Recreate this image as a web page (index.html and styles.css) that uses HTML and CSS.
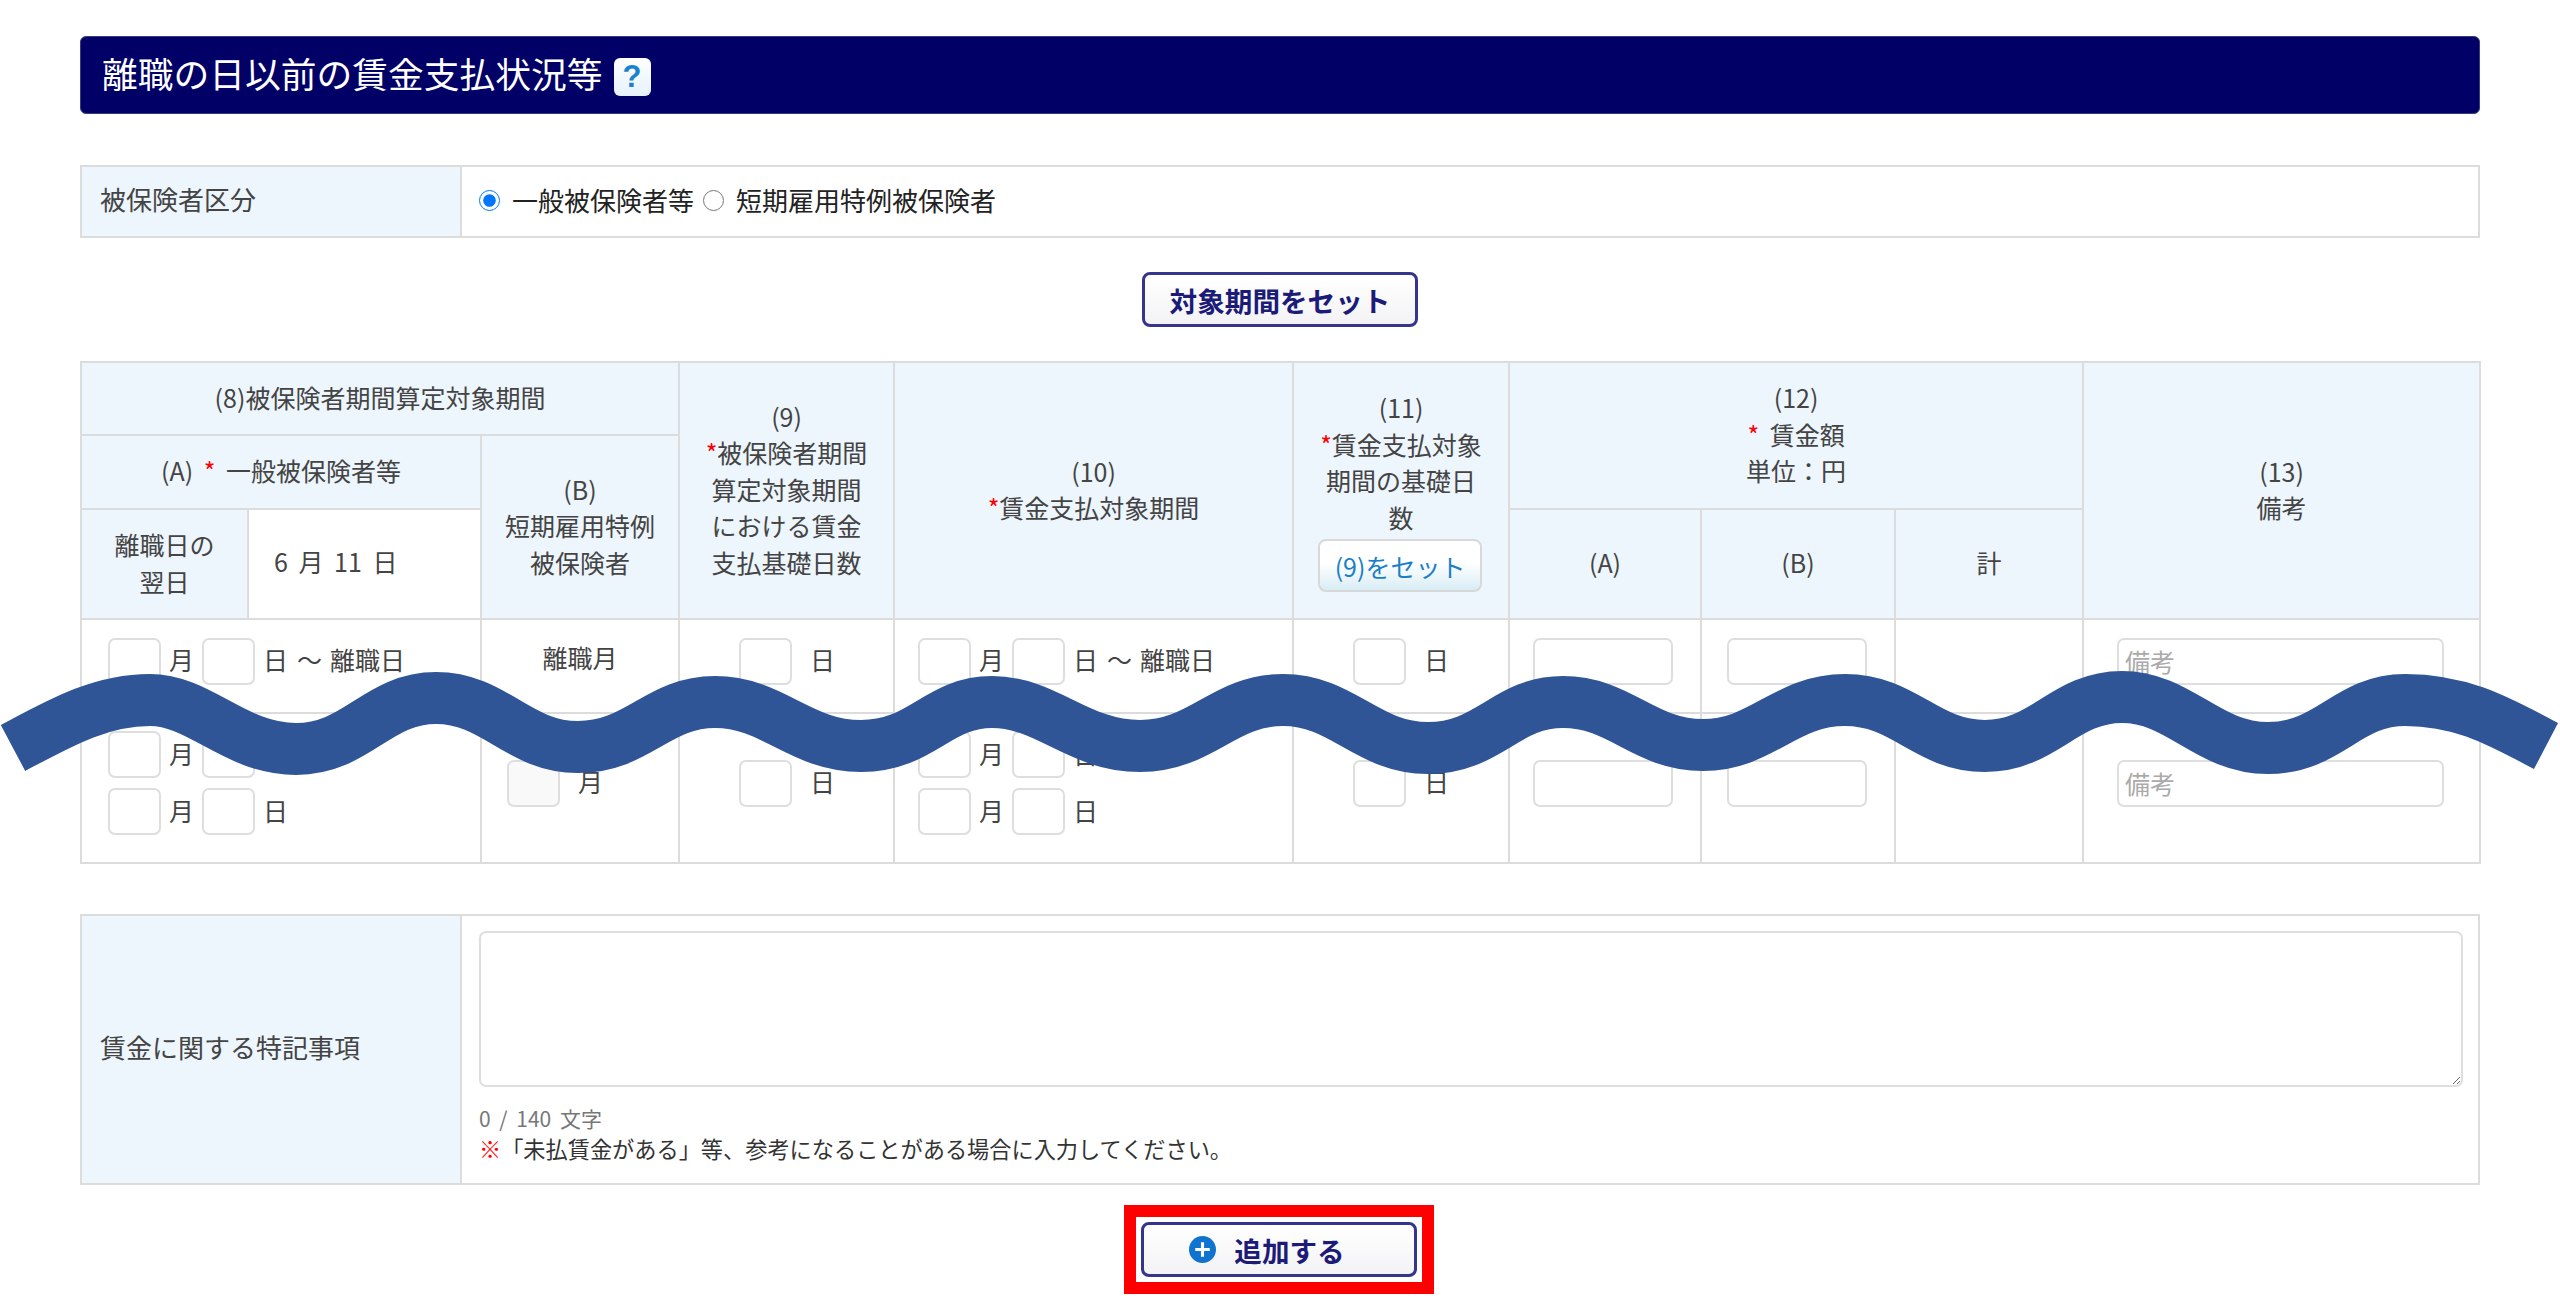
FILE: index.html
```html
<!DOCTYPE html>
<html lang="ja">
<head>
    <meta charset="utf-8">
    <title>離職の日以前の賃金支払状況等</title>
    <link rel="stylesheet" href="styles.css">
</head>
<body>
    <div class="page">
        <h2 class="section-title">離職の日以前の賃金支払状況等 <span class="help-icon">?</span></h2>

        <table class="form-table type-table">
            <tr>
                <th>被保険者区分</th>
                <td>
                    <div class="radio-group">
                        <input type="radio" id="typeGeneral" name="insuredType" checked>
                        <label for="typeGeneral">一般被保険者等</label>
                        <input type="radio" id="typeShort" name="insuredType">
                        <label for="typeShort">短期雇用特例被保険者</label>
                    </div>
                </td>
            </tr>
        </table>

        <div class="button-row period-row">
            <button type="button" class="main-button">対象期間をセット</button>
        </div>

        <table class="wage-table">
            <colgroup>
                <col class="col-a1"><col class="col-a2"><col class="col-b"><col class="col-9"><col class="col-10">
                <col class="col-11"><col class="col-12a"><col class="col-12b"><col class="col-total"><col class="col-13">
            </colgroup>
            <thead>
                <tr class="head-1">
                    <th colspan="3">(8)被保険者期間算定対象期間</th>
                    <th rowspan="3">(9)<br><span class="req">*</span>被保険者期間<br>算定対象期間<br>における賃金<br>支払基礎日数</th>
                    <th rowspan="3">(10)<br><span class="req">*</span>賃金支払対象期間</th>
                    <th rowspan="3" class="set-cell">
                        (11)<br><span class="req">*</span>賃金支払対象<br>期間の基礎日<br>数
                        <button type="button" class="sub-button">(9)をセット</button>
                    </th>
                    <th colspan="3" rowspan="2">(12)<br><span class="req">*</span> 賃金額<br>単位：円</th>
                    <th rowspan="3">(13)<br>備考</th>
                </tr>
                <tr class="head-2">
                    <th colspan="2">(A) <span class="req">*</span> 一般被保険者等</th>
                    <th rowspan="2">(B)<br>短期雇用特例<br>被保険者</th>
                </tr>
                <tr class="head-3">
                    <th>離職日の<br>翌日</th>
                    <td class="leave-date">6 月 11 日</td>
                    <th>(A)</th>
                    <th>(B)</th>
                    <th>計</th>
                </tr>
            </thead>
            <tbody>
                <tr class="body-1">
                    <td colspan="2" class="date-cell">
                        <div class="date-row">
                            <input type="text" class="num-input"><span>月</span>
                            <input type="text" class="num-input"><span>日<span class="tilde">～</span>離職日</span>
                        </div>
                    </td>
                    <td class="center-text"><div class="month-label">離職月</div></td>
                    <td class="days-cell"><div class="days-row"><input type="text" class="num-input"><span>日</span></div></td>
                    <td class="date-cell pay">
                        <div class="date-row">
                            <input type="text" class="num-input"><span>月</span>
                            <input type="text" class="num-input"><span>日<span class="tilde">～</span>離職日</span>
                        </div>
                    </td>
                    <td class="days-cell"><div class="days-row"><input type="text" class="num-input"><span>日</span></div></td>
                    <td class="amount-cell"><input type="text" class="amount-input"></td>
                    <td class="amount-cell second"><input type="text" class="amount-input"></td>
                    <td></td>
                    <td class="note-cell"><input type="text" class="note-input" placeholder="備考"></td>
                </tr>
                <tr class="body-2">
                    <td colspan="2" class="date-cell">
                        <div class="date-row">
                            <input type="text" class="num-input"><span>月</span>
                            <input type="text" class="num-input"><span>日</span>
                        </div>
                        <div class="date-row">
                            <input type="text" class="num-input"><span>月</span>
                            <input type="text" class="num-input"><span>日</span>
                        </div>
                    </td>
                    <td class="month-cell"><div class="days-row"><input type="text" class="num-input disabled-input"><span>月</span></div></td>
                    <td class="days-cell"><div class="days-row"><input type="text" class="num-input"><span>日</span></div></td>
                    <td class="date-cell pay">
                        <div class="date-row">
                            <input type="text" class="num-input"><span>月</span>
                            <input type="text" class="num-input"><span>日</span>
                        </div>
                        <div class="date-row">
                            <input type="text" class="num-input"><span>月</span>
                            <input type="text" class="num-input"><span>日</span>
                        </div>
                    </td>
                    <td class="days-cell"><div class="days-row"><input type="text" class="num-input"><span>日</span></div></td>
                    <td class="amount-cell"><input type="text" class="amount-input"></td>
                    <td class="amount-cell second"><input type="text" class="amount-input"></td>
                    <td></td>
                    <td class="note-cell"><input type="text" class="note-input" placeholder="備考"></td>
                </tr>
            </tbody>
        </table>

        <table class="form-table remark-table">
            <tr>
                <th>賃金に関する特記事項</th>
                <td>
                    <textarea class="remark-input"></textarea>
                    <div class="char-count">0 / 140 文字</div>
                    <div class="remark-note"><span class="note-mark">※</span>「未払賃金がある」等、参考になることがある場合に入力してください。</div>
                </td>
            </tr>
        </table>

        <div class="button-row">
            <div class="highlight-box">
                <button type="button" class="main-button add-button">
                    <svg class="plus-icon" viewBox="0 0 26 26" width="27" height="27">
                        <circle cx="13" cy="13" r="13" fill="#0f74cf"/>
                        <path d="M13 6v14M6 13h14" stroke="#fff" stroke-width="3"/>
                    </svg>
                    追加する
                </button>
            </div>
        </div>
    </div>

    <!-- page break mark drawn over the table -->
    <svg class="wave" viewBox="0 0 2560 1309" width="2560" height="1309">
        <path d="M13 748 C60 723 100 700 150 700 S235 749 296 749 S377 698 436 698 S518 747 578 747 S657 702 715 702 S800 746 861 746 S937 702 992 702 S1078 746 1140 746 S1223 700 1283 700 S1367 748 1428 748 S1506 702 1563 702 S1644 745 1703 745 S1785 700 1845 700 S1926 746 1985 746 S2064 697 2122 697 S2207 748 2268 748 S2347 700 2405 700 S2500 722 2546 746" fill="none" stroke="#2f5597" stroke-width="52"/>
    </svg>
</body>
</html>
```

FILE: styles.css
```css
* {
    box-sizing: border-box;
}
html, body {
    margin: 0;
    background-color: white;
}
body {
    position: relative;
    font-family: "Noto Sans CJK JP", "Noto Sans", sans-serif;
    font-size: 25px;
    line-height: 36.5px;
    color: #444;
}
.page {
    width: 2560px;
    padding: 36px 80px 15px;
}
.section-title {
    display: flex;
    align-items: center;
    gap: 11px;
    height: 78px;
    margin: 0 0 51px;
    padding: 0 21px 5px;
    background-color: #000066;
    border: 1px solid #3a3a80;
    border-radius: 6px;
    color: white;
    font-size: 35.75px;
    font-weight: normal;
    line-height: 1;
}
.help-icon {
    width: 37px;
    height: 38px;
    margin-top: 9px;
    background: linear-gradient(#ffffff, #e6f2fb);
    border-radius: 6px;
    color: #1a82d0;
    font-family: "Liberation Sans", sans-serif;
    font-size: 31px;
    font-weight: bold;
    line-height: 38px;
    text-align: center;
}
table {
    width: 100%;
    border-collapse: collapse;
    table-layout: fixed;
}
th, td {
    border: 2px solid #dcdcdc;
    padding: 0;
}
th {
    background-color: #edf5fd;
    font-weight: normal;
}
.form-table th {
    width: 380px;
    padding: 0 0 4px 18px;
    font-size: 26px;
    text-align: left;
}
.type-table tr {
    height: 71px;
}
.type-table td {
    padding-left: 17px;
}
.radio-group {
    display: flex;
    align-items: center;
    margin-bottom: 3px;
    color: #222;
    font-size: 26px;
}
.radio-group input {
    width: 21px;
    height: 21px;
    margin: 0 12px 0 0;
    accent-color: #0075ff;
}
.radio-group label {
    margin-right: 9px;
}
.button-row {
    display: flex;
    justify-content: center;
}
.period-row {
    margin: 34px 0;
}
.main-button {
    display: flex;
    align-items: center;
    justify-content: center;
    width: 276px;
    height: 55px;
    padding: 0;
    background: linear-gradient(#ffffff, #f3f3f5);
    border: 3px solid #35358c;
    border-radius: 8px;
    color: #1c1c78;
    font-family: inherit;
    font-size: 27.6px;
    font-weight: bold;
    cursor: pointer;
}

.col-a1 { width: 167px; }
.col-a2 { width: 233px; }
.col-b { width: 198px; }
.col-9 { width: 215px; }
.col-10 { width: 399px; }
.col-11 { width: 216px; }
.col-12a { width: 192px; }
.col-12b { width: 194px; }
.col-total { width: 188px; }
.col-13 { width: 397px; }

.head-1 { height: 73px; }
.head-2 { height: 74px; }
.head-3 { height: 110px; }
.body-1 { height: 94px; }
.body-2 { height: 150px; }

.wage-table {
    width: 2399px;
    margin-bottom: 50px;
}
.wage-table th {
    padding-bottom: 3px;
    text-align: center;
    word-spacing: 5px;
}
.wage-table .set-cell {
    padding-bottom: 0;
}
.req {
    color: #f00;
}
.sub-button {
    display: block;
    width: 164px;
    height: 53px;
    margin: 4px 0 0 24px;
    padding: 0;
    background: linear-gradient(#ffffff 45%, #d8edf5);
    border: 2px solid #d8d8d8;
    border-radius: 8px;
    color: #1a7fc8;
    font-family: inherit;
    font-size: 25px;
    cursor: pointer;
}
.leave-date {
    padding: 0 0 6px 25px;
    word-spacing: 5px;
}
input[type="text"] {
    height: 47px;
    background-color: white;
    border: 2px solid #dedede;
    border-radius: 7px;
    font-family: inherit;
    font-size: 25px;
    padding: 0 6px;
}
input::placeholder {
    color: #aaa;
}
.num-input {
    flex: none;
    width: 53px;
}
input.disabled-input {
    background-color: #f9f9f9;
}
.date-cell {
    padding-left: 26px;
}
.date-cell.pay {
    padding-left: 23px;
}
.date-row {
    display: flex;
    align-items: center;
    gap: 8px;
    margin-bottom: 10px;
}
.date-row span, .days-row span {
    padding-bottom: 3px;
}
.date-row span span {
    padding-bottom: 0;
}
.tilde {
    margin: 0 8px 0 9px;
}
.center-text {
    text-align: center;
}
.month-label {
    margin-bottom: 18px;
}
.days-cell {
    padding-left: 59px;
}
.month-cell {
    padding-left: 25px;
}
.days-row {
    display: flex;
    align-items: center;
    gap: 18px;
    margin-bottom: 10px;
}
.amount-cell {
    padding-left: 23px;
}
.amount-cell.second {
    padding-left: 25px;
}
.amount-input {
    display: block;
    width: 140px;
    margin-bottom: 10px;
}
.note-cell {
    padding-left: 33px;
}
.note-input {
    display: block;
    width: 327px;
    margin-bottom: 10px;
}

.remark-table tr {
    height: 269px;
}
.remark-table td {
    padding: 15px 15px 0 17px;
    vertical-align: top;
}
.remark-input {
    display: block;
    width: 100%;
    height: 156px;
    background-color: white;
    border: 2px solid #dedede;
    border-radius: 7px;
}
.char-count {
    margin-top: 16px;
    color: #777;
    font-size: 21px;
    line-height: 30px;
    word-spacing: 4px;
}
.remark-note {
    color: #333;
    font-size: 22.2px;
    line-height: 30px;
}
.note-mark {
    color: #f00;
    font-weight: bold;
}
.highlight-box {
    margin: 20px 2px 0 0;
    padding: 5px;
    border: 12px solid #f00;
}
.add-button {
    gap: 18px;
    padding-right: 24px;
}
.plus-icon {
    flex: none;
}
.wave {
    position: absolute;
    top: 0;
    left: 0;
    pointer-events: none;
}
```
